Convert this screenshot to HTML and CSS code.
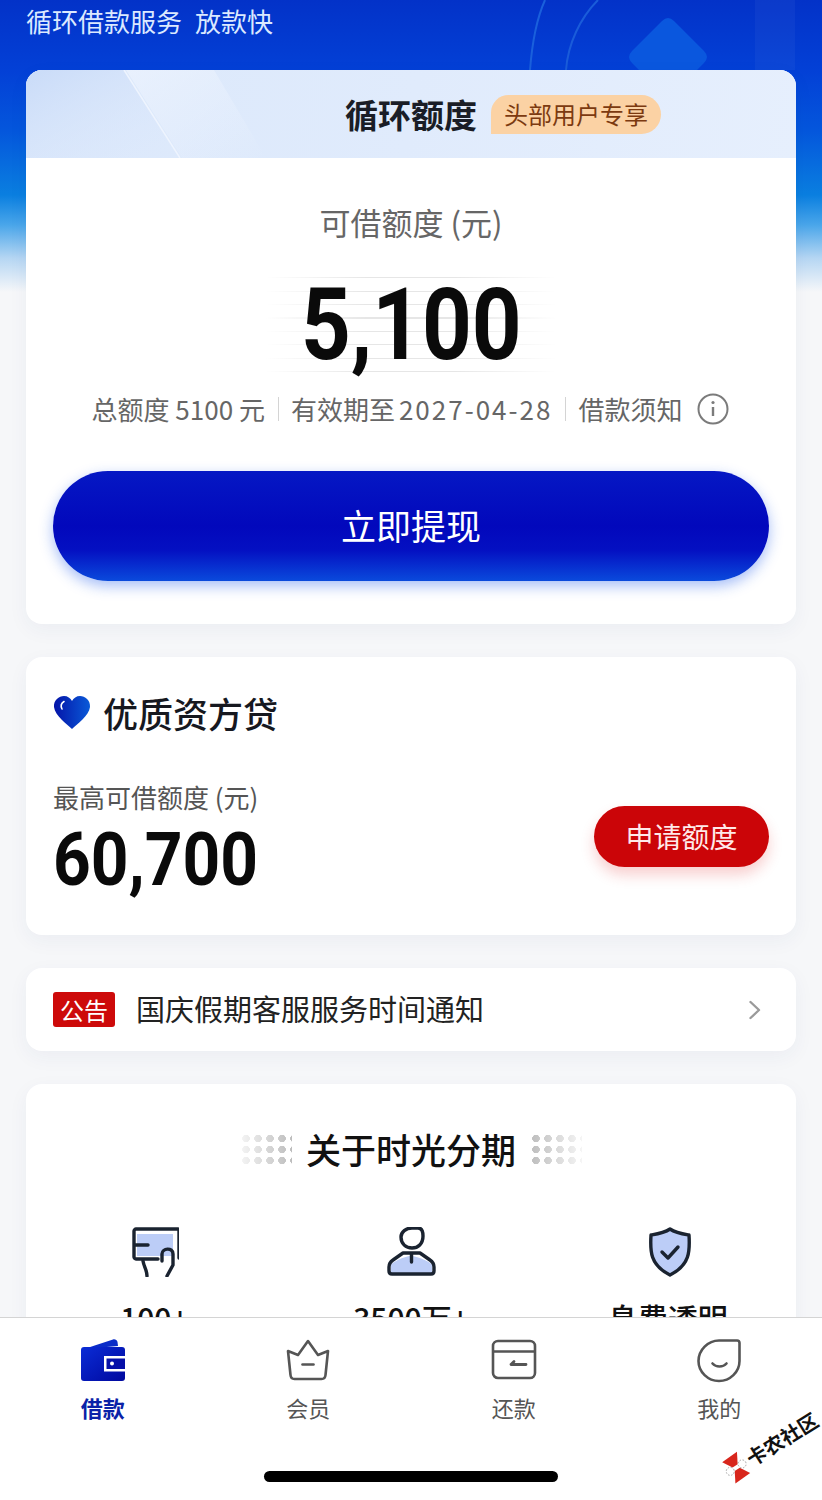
FILE: index.html
```html
<!DOCTYPE html>
<html lang="zh-CN">
<head>
<meta charset="UTF-8"/>
<meta name="viewport" content="width=device-width, initial-scale=1"/>
<title>时光分期</title>
<link rel="stylesheet" href="styles.css">
</head>
<body>
<main class="page">
  <div class="hero-bg">
    <svg class="hero-deco" width="300" height="70" viewBox="0 0 300 70" fill="none">
      <rect x="233" width="40" height="70" fill="#fff" opacity=".04"/>
      <path d="M8 70C10 44 14 20 23 0" stroke="#1a60dc" stroke-width="2"/>
      <path d="M44 70C46 44 58 18 76 0" stroke="#1a5cda" stroke-width="2"/>
      <path d="M140 21Q146 15 152 21L182 51Q188 57 182 63L152 93Q146 99 140 93L110 63Q104 57 110 51Z" fill="#0a57de"/>
    </svg>
  </div>

  <p class="slogan">循环借款服务<span class="slogan-gap"></span>放款快</p>

  <section class="card quota">
    <header class="quota-head">
      <svg class="quota-lines" width="300" height="88" viewBox="0 0 300 88" fill="none">
        <defs>
          <linearGradient id="headShade" x1="0" y1="0" x2="1" y2="1"><stop offset="0" stop-color="#c9dbf8"/><stop offset="1" stop-color="#dfeafc" stop-opacity="0"/></linearGradient>
          <linearGradient id="headShine" x1="0" y1="0" x2="1" y2="1"><stop offset="0" stop-color="#eef4fe"/><stop offset="1" stop-color="#eef4fe" stop-opacity="0"/></linearGradient>
        </defs>
        <path d="M0 0H98L152 88H0Z" fill="url(#headShade)"/>
        <path d="M98 0L154 88" stroke="#eef4fe" stroke-width="1.500"/>
        <path d="M100 0H188L240 88H156Z" fill="url(#headShine)" opacity=".7"/>
      </svg>
      <h2 class="quota-title">循环额度</h2>
      <span class="quota-tag">头部用户专享</span>
    </header>
    <div class="quota-body">
      <p class="quota-label">可借额度 (元)</p>
      <div class="quota-amount"><span>5,100</span></div>
      <ul class="quota-info">
        <li>总额度 5100 元</li>
        <li>有效期至<span class="quota-date">2027-04-28</span></li>
        <li>借款须知<svg class="info-icon" width="32" height="32" viewBox="0 0 32 32" fill="none">
            <circle cx="16" cy="16" r="14.500" stroke="#7b7b7b" stroke-width="2"/>
            <circle cx="16" cy="9.500" r="1.600" fill="#7b7b7b"/>
            <path d="M16 14V23" stroke="#7b7b7b" stroke-width="2.400"/>
          </svg></li>
      </ul>
      <button class="withdraw-btn">立即提现</button>
    </div>
  </section>

  <section class="card funder">
    <h3 class="funder-title">
      <svg width="38" height="34" viewBox="0 0 38 34" fill="none">
        <defs><linearGradient id="heartFill" x1="0" y1="0" x2="1" y2="0"><stop offset="0" stop-color="#0414a8"/><stop offset="1" stop-color="#0a5ad8"/></linearGradient></defs>
        <path d="M19 33C14 28 2 20 1 11C0.500 4 6 0 11 0C14.500 0 17.500 2 19 5C20.500 2 23.500 0 27 0C32 0 37.500 4 37 11C36 20 24 28 19 33Z" fill="url(#heartFill)"/>
        <path d="M9 13C7.500 10 8.500 7 11 5.500" stroke="#fff" stroke-width="1.600" stroke-linecap="round"/>
      </svg>
      优质资方贷
    </h3>
    <div class="funder-row">
      <div>
        <p class="funder-label">最高可借额度 (元)</p>
        <div class="funder-amount"><span>60,700</span></div>
      </div>
      <button class="apply-btn">申请额度</button>
    </div>
  </section>

  <section class="card notice">
    <span class="notice-tag">公告</span>
    <span class="notice-text">国庆假期客服服务时间通知</span>
    <svg class="notice-arrow" width="14" height="20" viewBox="0 0 14 20" fill="none">
      <path d="M2.500 2L11 10L2.500 18" stroke="#9a9a9a" stroke-width="2.400" stroke-linecap="round" stroke-linejoin="round"/>
    </svg>
  </section>

  <section class="card about">
    <h3 class="about-title">
      <span class="dots dots-left"></span>
      关于时光分期
      <span class="dots dots-right"></span>
    </h3>
    <div class="about-grid">
      <div class="about-item">
        <svg width="50" height="50" viewBox="0 0 50 50" fill="none">
          <rect x="8" y="7" width="36" height="22" fill="#bccdf7"/>
          <path d="M29 32H7C6 32 5 31 5 30V4C5 3 6 2 7 2H49C50 2 50 3 50 4V31" stroke="#1a2330" stroke-width="3.400" stroke-linecap="round" stroke-linejoin="round"/>
          <path d="M6 18H19" stroke="#1a2330" stroke-width="3.400" stroke-linecap="round"/>
          <path d="M14 34C15 40 18 43 18 49M33 34V27C33 21 44 20 44 27V38L38 49" stroke="#1a2330" stroke-width="3.400" stroke-linecap="round" stroke-linejoin="round"/>
        </svg>
        <strong>100+</strong>
      </div>
      <div class="about-item">
        <svg width="50" height="50" viewBox="0 0 50 50" fill="none">
          <path d="M5 46V38C5 36 18 29 25 29C32 29 46 36 46 38V46Z" fill="#bccdf7"/>
          <path d="M26 1H32C36 1 37 4 37 9C37 17 32 21 26 21C20 21 15 17 15 10C15 5 20 1 26 1Z" stroke="#1a2330" stroke-width="3.400" stroke-linejoin="round"/>
          <path d="M17 26L7 33C4 35 3 37 3 40V44C3 46 4 47 6 47H45C47 47 48 46 48 44V40C48 37 47 35 44 33L34 26Z" stroke="#1a2330" stroke-width="3.400" stroke-linejoin="round"/>
          <path d="M25.500 27V35" stroke="#1a2330" stroke-width="3.400" stroke-linecap="round"/>
        </svg>
        <strong>3500万+</strong>
      </div>
      <div class="about-item">
        <svg width="50" height="50" viewBox="0 0 50 50" fill="none">
          <path d="M27 2C33 6 40 7 46 8C47 24 47 38 27 48C7 38 7 24 8 8C14 7 21 6 27 2Z" fill="#bccdf7" stroke="#1a2330" stroke-width="3.400" stroke-linejoin="round"/>
          <path d="M19 25L25 31L35 20" stroke="#1a2330" stroke-width="3.400" stroke-linecap="round" stroke-linejoin="round"/>
        </svg>
        <strong>息费透明</strong>
      </div>
    </div>
  </section>
</main>

<nav class="tabbar">
  <div class="tabs">
    <a class="tab tab-active">
      <svg width="46" height="46" viewBox="0 0 46 46" fill="none">
        <defs><linearGradient id="walletFill" x1="0" y1="0" x2="1" y2="1"><stop offset="0" stop-color="#0a2cd6"/><stop offset="1" stop-color="#00089e"/></linearGradient></defs>
        <path d="M4 11L33 1.500C35 1 37 2 37.500 4L38 8Z" fill="#0a2cc8"/>
        <rect x="1" y="9" width="44" height="34" rx="3" fill="url(#walletFill)"/>
        <rect x="24" y="18" width="21" height="15.500" fill="#fff"/>
        <rect x="26.500" y="20.500" width="18.500" height="10.500" fill="#0610a8"/>
        <circle cx="32" cy="25.500" r="2" fill="#fff"/>
      </svg>
      <span>借款</span>
    </a>
    <a class="tab">
      <svg width="46" height="46" viewBox="0 0 46 46" fill="none">
        <path d="M3 13L13 17L23 3L33 17L43 13L40.500 37C40.300 39.500 39 41 36.500 41H9.500C7 41 5.700 39.500 5.500 37Z" stroke="#555" stroke-width="2.600" stroke-linejoin="round"/>
        <path d="M17.500 26.500H28.500" stroke="#555" stroke-width="2.600" stroke-linecap="round"/>
      </svg>
      <span>会员</span>
    </a>
    <a class="tab">
      <svg width="46" height="46" viewBox="0 0 46 46" fill="none">
        <rect x="2" y="3" width="42" height="37" rx="5" stroke="#555" stroke-width="2.600"/>
        <path d="M2 13.500H44" stroke="#555" stroke-width="2.600"/>
        <path d="M20 26.500H35M20 26.500L23 23.500" stroke="#555" stroke-width="2.800" stroke-linecap="round"/>
      </svg>
      <span>还款</span>
    </a>
    <a class="tab">
      <svg width="46" height="46" viewBox="0 0 46 46" fill="none">
        <path d="M23 2.500H41C42.500 2.500 43.500 3.500 43.500 5V23C43.500 34 34 43 23 43C12 43 2.500 34 2.500 23C2.500 12 12 2.500 23 2.500Z" stroke="#555" stroke-width="2.600"/>
        <path d="M16.500 25.500C20 29.500 27 29.500 30.500 25.500" stroke="#555" stroke-width="2.600" stroke-linecap="round"/>
      </svg>
      <span>我的</span>
    </a>
  </div>
  <div class="home-bar"></div>
</nav>

<div class="forum-mark">
  <svg width="24" height="30" viewBox="0 0 24 30">
    <path d="M3 3L21 2L15 13H9Z" fill="#d8261c"/>
    <path d="M3 28L21 27L15 17H9Z" fill="#d8261c"/>
    <circle cx="5" cy="15" r="4" fill="#fff" stroke="#999" stroke-width=".8" stroke-dasharray="1.500 1.500"/>
    <circle cx="19" cy="15" r="4" fill="#fff" stroke="#999" stroke-width=".8" stroke-dasharray="1.500 1.500"/>
  </svg>
  <span>卡农社区</span>
</div>
</body>
</html>
```

FILE: styles.css
```css
*
{
box-sizing: border-box;
}

html, body
{
margin: 0;
padding: 0;
width: 100%;
height: 100%;
}

body
{
position: relative;
display: flex;
flex-direction: column;
height: 1500px;
overflow: hidden;
background: #f6f7f9;
font-family: "Noto Sans CJK SC", "Noto Sans", sans-serif;
color: #111;
}

h2, h3, p, ul
{
margin: 0;
padding: 0;
}

button
{
border: 0;
font-family: inherit;
cursor: pointer;
}

/* page above the tab bar */
.page
{
position: relative;
height: 1317px;
flex: none;
overflow: hidden;
padding: 0 26px;
display: flex;
flex-direction: column;
}

.hero-bg
{
position: absolute;
top: 0;
left: 0;
right: 0;
height: 292px;
overflow: hidden;
background: linear-gradient(180deg, #0332c8 0, #0340d6 70px, #0456dc 130px, #0a7fe0 195px, #4aa6ea 225px, #b5d6f3 258px, #f6f7f9 292px);
}

.hero-deco
{
position: absolute;
top: 0;
left: 522px;
}

.slogan
{
position: relative;
height: 70px;
flex: none;
padding-top: 3px;
font-size: 26px;
line-height: 36px;
color: #dbe9ff;
}

.slogan-gap
{
display: inline-block;
width: 13px;
}

.card
{
position: relative;
flex: none;
background: #fff;
border-radius: 16px;
margin-bottom: 33px;
box-shadow: 0 6px 20px rgba(40, 60, 110, 0.05);
}

/* quota card */
.quota
{
height: 554px;
overflow: hidden;
}

.quota-head
{
position: relative;
height: 88px;
display: grid;
grid-template-columns: 1fr auto 1fr;
align-items: center;
gap: 14px;
background: linear-gradient(100deg, #dbe8fb 0, #e0ebfc 50%, #e6effd 100%);
}

.quota-lines
{
position: absolute;
left: 0;
top: 0;
}

.quota-title
{
grid-column: 2;
position: relative;
font-size: 33px;
line-height: 44px;
font-weight: 700;
color: #1a1d26;
}

.quota-tag
{
position: relative;
justify-self: start;
height: 39px;
padding: 0 13px;
font-size: 24px;
line-height: 38px;
color: #7c3a10;
background: #fbd2a4;
border-radius: 18px 20px 20px 0;
}

.quota-body
{
padding: 0 27px;
display: flex;
flex-direction: column;
align-items: center;
}

.quota-label
{
margin-top: 42px;
font-size: 31px;
line-height: 44px;
color: #666;
}

.quota-amount
{
margin-top: 33px;
width: 290px;
height: 96px;
text-align: center;
font-family: Roboto, sans-serif;
font-weight: 700;
font-size: 101px;
line-height: 96px;
color: #0a0a0a;
background:
  linear-gradient(90deg, #fff 0, transparent 35%, transparent 65%, #fff 100%),
  repeating-linear-gradient(180deg, #e6e6e6 0, #e6e6e6 1px, transparent 1px, transparent 13.500px);
}

/* Roboto digits are wider than the app's numeral face */
.quota-amount span,
.funder-amount span
{
display: inline-block;
}

.quota-amount span
{
transform: scaleX(0.86);
}

.quota-info
{
margin-top: 24px;
list-style: none;
display: flex;
align-items: center;
font-size: 26px;
line-height: 36px;
color: #666;
}

.quota-info li
{
display: flex;
align-items: center;
height: 24px;
padding: 0 13px 0 12px;
border-left: 1px solid #d4d4d4;
white-space: nowrap;
}

.quota-info li:first-child
{
border-left: 0;
}

.quota-date
{
margin-left: 4px;
letter-spacing: 2px;
}

.info-icon
{
margin-left: 15px;
}

.withdraw-btn
{
margin-top: 50px;
width: 100%;
height: 110px;
padding-bottom: 4px;
border-radius: 55px;
font-size: 35px;
font-weight: 400;
color: #fff;
background: linear-gradient(180deg, #0518c4 0, #0208bc 50%, #0410c2 72%, #0a4adc 100%);
box-shadow: 0 5px 14px rgba(30, 90, 235, 0.4);
}

/* funder card */
.funder
{
height: 278px;
padding: 31px 27px 0;
}

.funder-title
{
display: flex;
align-items: center;
gap: 12px;
font-size: 35px;
line-height: 50px;
font-weight: 500;
color: #16181f;
}

.funder-row
{
margin-top: 40px;
display: flex;
align-items: center;
justify-content: space-between;
}

.funder-label
{
font-size: 26px;
line-height: 38px;
color: #555;
}

.funder-amount
{
margin-top: 8px;
font-family: Roboto, sans-serif;
font-weight: 700;
font-size: 74px;
line-height: 72px;
color: #0a0a0a;
}

.funder-amount span
{
transform: scaleX(0.89);
transform-origin: left center;
}

.apply-btn
{
margin-top: -1px;
width: 175px;
height: 61px;
padding-bottom: 3px;
border-radius: 31px;
font-size: 28px;
color: #ffe9e9;
background: #cb0508;
box-shadow: 0 8px 14px rgba(225, 40, 40, 0.22);
}

/* notice row */
.notice
{
height: 83px;
padding: 0 34px 0 27px;
display: flex;
align-items: center;
}

.notice-tag
{
width: 62px;
height: 35px;
text-align: center;
font-size: 24px;
line-height: 35px;
color: #fff;
background: #cd0a0a;
border-radius: 3px;
}

.notice-text
{
margin-left: 21px;
padding-bottom: 3px;
flex: 1;
font-size: 29px;
color: #222;
}

/* about card */
.about
{
height: 400px;
padding-top: 40px;
}

.about-title
{
display: flex;
align-items: center;
justify-content: center;
gap: 14px;
font-size: 35px;
line-height: 50px;
font-weight: 500;
color: #111;
}

.dots
{
width: 52px;
height: 32px;
background-image: radial-gradient(circle, #bdbdbd 3.600px, transparent 4px);
background-size: 12px 11px;
}

.dots-left
{
-webkit-mask-image: linear-gradient(90deg, rgba(0,0,0,0.15), #000);
mask-image: linear-gradient(90deg, rgba(0,0,0,0.15), #000);
}

.dots-right
{
-webkit-mask-image: linear-gradient(90deg, #000, rgba(0,0,0,0.15));
mask-image: linear-gradient(90deg, #000, rgba(0,0,0,0.15));
}

.about-grid
{
margin-top: 53px;
display: grid;
grid-template-columns: repeat(3, 1fr);
}

.about-item
{
display: flex;
flex-direction: column;
align-items: center;
}

.about-item strong
{
margin-top: 20px;
font-size: 30px;
line-height: 40px;
font-weight: 500;
}

/* bottom navigation */
.tabbar
{
position: relative;
flex: 1;
background: #fff;
border-top: 1px solid #d4d4d4;
}

.tabs
{
display: grid;
grid-template-columns: repeat(4, 1fr);
padding-top: 20px;
}

.tab
{
display: flex;
flex-direction: column;
align-items: center;
font-size: 22px;
line-height: 30px;
color: #555;
}

.tab span
{
margin-top: 8px;
}

.tab-active
{
font-weight: 700;
color: #0a22a8;
}

.home-bar
{
width: 294px;
height: 11px;
margin: 49px auto 0;
background: #000;
border-radius: 6px;
}

/* forum stamp in the corner */
.forum-mark
{
position: absolute;
left: 726px;
top: 1459px;
display: flex;
align-items: center;
gap: 2px;
transform: rotate(-32deg);
transform-origin: left center;
font-size: 20px;
font-weight: 700;
line-height: 30px;
color: #111;
white-space: nowrap;
}
```
